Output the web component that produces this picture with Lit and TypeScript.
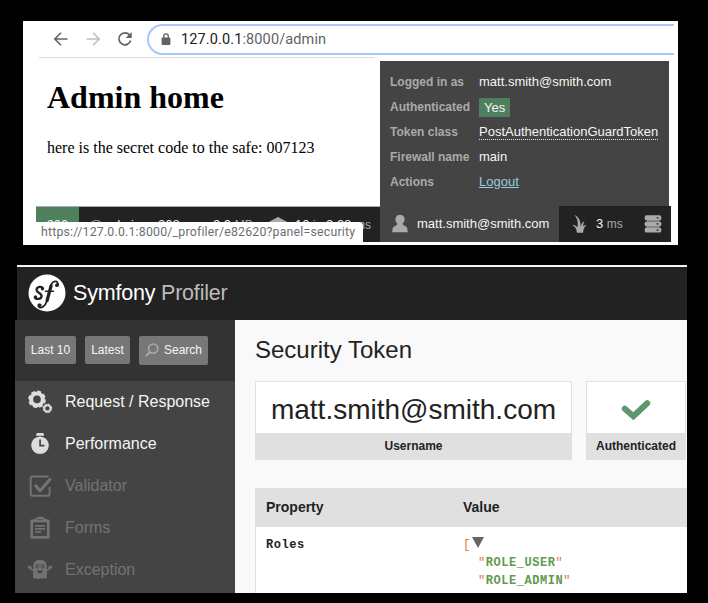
import { LitElement, html, css, svg } from "lit";
import { customElement } from "lit/decorators.js";

const icons = {
  back: svg`<svg width="16" height="16" viewBox="0 0 16 16" fill="none" stroke="#5f6368" stroke-width="1.6"><path d="M14.5 8H2M8 1.8 1.8 8 8 14.2"/></svg>`,
  forward: svg`<svg width="16" height="16" viewBox="0 0 16 16" fill="none" stroke="#bdbfc2" stroke-width="1.6"><path d="M1.5 8H14M8 1.8 14.2 8 8 14.2"/></svg>`,
  reload: svg`<svg width="16" height="16" viewBox="0 0 16 16"><path d="M12.6 4A6 6 0 1 0 13.7 9.6" fill="none" stroke="#5f6368" stroke-width="1.7"/><path d="M14.7 1v6.1H8.6z" fill="#5f6368"/></svg>`,
  lock: svg`<svg width="10" height="13" viewBox="0 0 10 13"><rect x=".6" y="4.6" width="8.8" height="7.4" rx="1" fill="#5f6368"/><path d="M2.7 5V3.2a2.3 2.3 0 0 1 4.6 0V5" fill="none" stroke="#5f6368" stroke-width="1.3"/></svg>`,
  user: svg`<svg width="16" height="19" viewBox="0 0 16 19" fill="#aaa"><path d="M8 .7C5.2.7 3.4 2.6 3.4 5.2c0 2 .9 3.7 2.2 4.6-.1.9-.8 1.3-2.2 1.9C1.1 12.7.4 13.7.3 18.3H15.7C15.6 13.7 14.9 12.7 12.6 11.7 11.2 11.1 10.5 10.7 10.4 9.8 11.7 8.900 12.600 7.200 12.600 5.200 12.600 2.600 10.800.7 8 .7z"/></svg>`,
  twig: svg`<svg width="15" height="18" viewBox="0 0 15 18" fill="#aaa"><path d="M2.300.1C7 2 8.800 6 8.800 12.200 9.200 8.800 10.300 6.800 12.600 6.200 11.600 8 11.100 9.600 11.100 11.400 12 10.300 13 9.900 14.600 10.400 12.300 11.500 11.400 13.800 11 17.700H4.800C4.700 14.200 3.600 11.800.4 10.200 2.600 9.800 4.200 10.800 5.300 12.600 6.500 7.500 5.600 3.600 2.300.1z"/></svg>`,
  server: svg`<svg width="18" height="18" viewBox="0 0 18 18"><g fill="#aaa"><rect x=".7" y=".3" width="16.6" height="5" rx="1.9"/><rect x="2.5" y="5.3" width="13" height="1"/><rect x=".7" y="6.4" width="16.6" height="5" rx="1.9"/><rect x="2.5" y="11.5" width="13" height="1"/><rect x=".7" y="12.6" width="16.6" height="5" rx="1.9"/></g><path d="M12.6 2.8h2M12.6 8.9h2M12.6 15.1h2" stroke="#222" stroke-width="1.3"/></svg>`,
  layers: svg`<svg width="18" height="16" viewBox="0 0 18 16" fill="#aaa"><path d="M9 0 17.5 4.500V12L9 16 .5 12V4.500z"/></svg>`,
  logo: svg`<svg width="38" height="38" viewBox="0 0 38 38"><circle cx="19" cy="19" r="18.5" fill="#fff"/><g fill="none" stroke="#222" stroke-linecap="round"><path d="M14.800 14.500C14.300 12 8.900 12.300 8.500 15.700 8.200 19 14.200 19.200 13.600 22.500 13 25.500 7.500 25.700 6.900 23.200" stroke-width="2.300"/><path d="M30 10.800C30.300 6.400 24.800 5.700 22.600 12.200L18.600 27.500C17.500 31.200 14 34.800 11.200 33.200 9.800 32.200 10 30.700 11.300 30.400" stroke-width="1.800"/><path d="M23.100 11.800 19.100 26.500" stroke-width="3.200"/><path d="M17.500 17.300h7.900" stroke-width="1.500"/></g><g fill="#222"><circle cx="14.500" cy="14.700" r="1.700"/><circle cx="7.500" cy="22.900" r="1.700"/><circle cx="29" cy="11.200" r="1.900"/><circle cx="11.800" cy="31.200" r="1.800"/></g></svg>`,
  search: svg`<svg width="14" height="14" viewBox="0 0 14 14" fill="none" stroke="#aaa" stroke-width="1.5"><circle cx="8.200" cy="5.600" r="4.600"/><path d="M5 9 .8 13" stroke-width="2"/></svg>`,
  gears: svg`<svg width="26" height="24" viewBox="0 0 26 24" fill="none" stroke="#ddd"><circle cx="10" cy="9.400" r="5.800" stroke-width="4"/><circle cx="10" cy="9.400" r="8" stroke-width="1.600" stroke-dasharray="4 2.283"/><circle cx="20.400" cy="18.400" r="3.200" stroke-width="2"/><circle cx="20.400" cy="18.400" r="4.300" stroke-width="1" stroke-dasharray="2.200 1.177"/></svg>`,
  clock: svg`<svg width="26" height="24" viewBox="0 0 26 24"><path d="M9.3 3.7V2.200Q9.300.9 11 .9h4.200q1.700 0 1.700 1.300v1.500z" fill="#ddd"/><circle cx="13" cy="13.200" r="8.800" fill="#ddd"/><path d="M13.100 7.500v6.200h4.400" fill="none" stroke="#444" stroke-width="1.700"/></svg>`,
  check: svg`<svg width="26" height="24" viewBox="0 0 26 24" fill="none" stroke="#737373"><path d="M21.500 2.500H5Q3.700 2.500 3.700 4v16Q3.700 21.700 5.200 21.700H21Q22.600 21.700 22.600 20v-7" stroke-width="1.900"/><path d="M8 11l5 5.800L23.800 4.600" stroke-width="3"/></svg>`,
  form: svg`<svg width="26" height="24" viewBox="0 0 26 24"><path d="M4.700 4.800H21.300V21.300H4.700z" fill="none" stroke="#737373" stroke-width="2.800" stroke-linejoin="round"/><path d="M7.200 6V2.500h2.300Q9.500.8 11 .8h4.500Q17 .8 17 2.500h2.300V6z" fill="#737373"/><path d="M10.500 3.600h5.500" stroke="#555"/><path d="M8 9.900h10M8 12.900h10M8 15.900h6" stroke="#737373" stroke-width="1.700"/></svg>`,
  ghost: svg`<svg width="26" height="24" viewBox="0 0 26 24"><path d="M6.200 20V8.500C6.200 3.800 9 2.100 13 2.100s6.800 1.700 6.800 6.400V20q-.6 1-1.500 0-1 1-2 0-.6 1.500-1.700.4-.8-1-1.600 0-1 1-1.600 0-1.200 1.200-2.100-.3-1.200 1.200-1.700 0-.9 1-1.400-.1z" fill="#737373"/><path d="M7 12.200Q3.800 12.500 2.900 8.900M.8 9.600h4M19 12.200q3.200.3 4.100-3.300M21.200 9.600h4M2.600 7.500v2M23.400 7.500v2" fill="none" stroke="#737373" stroke-width="1.600"/><ellipse cx="10.300" cy="8.300" rx="1.900" ry="2.400" fill="#4b4b4b"/><ellipse cx="15.700" cy="8.300" rx="1.900" ry="2.400" fill="#4b4b4b"/><circle cx="10.400" cy="8.300" r="1.100" fill="#737373"/><circle cx="15.600" cy="8.300" r="1.100" fill="#737373"/><path d="M10 12.400h6q-.6 2.800-3 2.800t-3-2.800z" fill="#444"/></svg>`,
  tick: svg`<svg width="30" height="22" viewBox="0 0 30 22"><path d="M3.800 9.700 12.400 17.300 26.200 4.200" fill="none" stroke="#5e976e" stroke-width="6" stroke-linecap="round" stroke-linejoin="miter"/></svg>`,
};

const menu = [
  { icon: icons.gears, label: "Request / Response", on: true },
  { icon: icons.clock, label: "Performance", on: true },
  { icon: icons.check, label: "Validator", on: false },
  { icon: icons.form, label: "Forms", on: false },
  { icon: icons.ghost, label: "Exception", on: false },
];

@customElement("browser-window")
class BrowserWindow extends LitElement {
  static styles = css`
    :host { display: block; position: relative; width: 655px; height: 224px; background: #fff; overflow: hidden; font-family: "Liberation Sans", Arial, sans-serif; }
    * { box-sizing: border-box; }
    svg { display: block; flex: none; }
    .nav { display: flex; align-items: center; height: 36px; padding: 0 4px 0 30px; gap: 16px; }
    .address { flex: 1; height: 31px; margin: 0 0 0 -2px; border: 2px solid #a8c7fa; border-right: 0; border-radius: 16px 0 0 16px; display: flex; align-items: center; gap: 10px; padding-left: 12px; font: 14.5px Roboto, sans-serif; letter-spacing: .12px; color: #5f6368; }
    .address b { font-weight: 400; color: #202124; }
    .line { width: 336px; height: 1px; margin-left: 16px; background: #dadce0; }
    .page { padding: 0 24px; font-family: "Liberation Serif", serif; color: #000; }
    h1 { margin: 21px 0 0; font-size: 32px; line-height: 36px; }
    p { margin: 24px 0 0; font-size: 16px; line-height: 18px; }
    .popup { position: absolute; left: 357px; top: 40px; width: 289px; height: 146px; margin: 0; background: #444; padding: 8px 10px; display: grid; grid-template-columns: 89px 1fr; grid-auto-rows: 25px; align-items: center; font-size: 13px; color: #f5f5f5; }
    .popup dt { font-weight: 700; font-size: 12px; color: #aaa; }
    .popup dd { margin: 0; white-space: nowrap; }
    .yes { display: inline-block; background: #4f805d; line-height: 19px; padding: 0 5px; position: relative; top: 1px; }
    .abbr { display: inline-block; line-height: 14px; border-bottom: 1px dotted #ddd; }
    .logout { color: #99cdd8; text-decoration: underline; }
    .bar { position: absolute; left: 13px; top: 185px; width: 635px; height: 36px; background: #222; display: flex; color: #f5f5f5; font-size: 13px; line-height: 36px; }
    .left { display: flex; width: 344px; border-top: 1px solid #aaa; }
    .code { width: 43px; background: #4f805d; text-align: center; }
    .route { padding-left: 10px; width: 79px; }
    .time { width: 55px; }
    .mem { width: 56px; }
    .cache { display: flex; align-items: center; gap: 8px; white-space: nowrap; }
    .user { width: 179px; background: #444; display: flex; align-items: center; gap: 9px; padding-left: 12px; line-height: 34px; padding-bottom: 1px; }
    .twig { display: flex; align-items: center; gap: 9px; padding-left: 13px; width: 85px; line-height: 34px; padding-bottom: 1px; }
    .srv { display: flex; align-items: center; padding-bottom: 1px; }
    .muted { color: #aaa; }
    .small { font-size: 12px; }
    .status { position: absolute; left: 0; top: 201px; width: 340px; height: 21px; border-radius: 0 4px 0 0; background: #fff; padding-left: 18px; font: 12.3px/20px Roboto, sans-serif; letter-spacing: .21px; color: #6b6e71; white-space: nowrap; }
  `;
  render() {
    return html`
      <div class="nav">${icons.back}${icons.forward}${icons.reload}
        <div class="address">${icons.lock}<span><b>127.0.0.1</b>:8000/admin</span></div>
      </div>
      <div class="line"></div>
      <div class="page"><h1>Admin home</h1><p>here is the secret code to the safe: 007123</p></div>
      <dl class="popup">
        <dt>Logged in as</dt><dd>matt.smith@smith.com</dd>
        <dt>Authenticated</dt><dd><span class="yes">Yes</span></dd>
        <dt>Token class</dt><dd><span class="abbr">PostAuthenticationGuardToken</span></dd>
        <dt>Firewall name</dt><dd>main</dd>
        <dt>Actions</dt><dd><span class="logout">Logout</span></dd>
      </dl>
      <div class="bar">
        <div class="left">
          <div class="code">200</div>
          <div class="route"><span class="muted">@</span> admin</div>
          <div class="time">208</div>
          <div class="mem">2.0 <span class="muted small">MB</span></div>
          <div class="cache">${icons.layers}<span>10 <span class="muted small">in</span> 2.28 <span class="muted small">ms</span></span></div>
        </div>
        <div class="user">${icons.user}<span>matt.smith@smith.com</span></div>
        <div class="twig">${icons.twig}<span>3 <span class="muted small">ms</span></span></div>
        <div class="srv">${icons.server}</div>
      </div>
      <div class="status">https://127.0.0.1:8000/_profiler/e82620?panel=security</div>`;
  }
}

@customElement("profiler-window")
class ProfilerWindow extends LitElement {
  static styles = css`
    :host { display: block; width: 672px; height: 328px; overflow: hidden; font-family: "Liberation Sans", Arial, sans-serif; color: #222; }
    * { box-sizing: border-box; }
    svg { display: block; flex: none; }
    header { margin-left: 2px; height: 55px; border-top: 2px solid #f5f5f5; background: #222; display: flex; align-items: center; gap: 7px; padding: 0 0 1px 11px; font-size: 21.5px; letter-spacing: -.2px; color: #fff; }
    header span { color: #bbb; }
    .cols { display: grid; grid-template-columns: 220px 1fr; height: 273px; }
    aside { background: #444; }
    .shortcuts { height: 61px; background: #333; padding: 16px 10px; display: flex; gap: 9px; color: #f5f5f5; font-size: 12px; }
    .btn { height: 28px; background: #777; border-radius: 2px; display: flex; align-items: center; justify-content: center; width: 51px; }
    .btn.latest { width: 45px; }
    .btn.search { width: 69px; height: 29px; gap: 5px; padding-bottom: 1px; }
    .item { height: 42px; display: flex; align-items: center; gap: 12px; padding-left: 12px; font-size: 16px; color: #737373; }
    .item.on { color: #f5f5f5; }
    main { background: #f9f9f9; padding-left: 20px; overflow: hidden; }
    h2 { margin: 16px 0 0; font-weight: 400; font-size: 24px; line-height: 28px; }
    .metrics { display: flex; gap: 14px; margin-top: 17px; }
    .metric { width: 317px; height: 79px; flex: none; background: #fff; border: 1px solid #e0e0e0; display: flex; flex-direction: column; text-align: center; }
    .metric.auth { width: 100px; }
    .value { flex: 1; display: flex; align-items: center; justify-content: center; font-size: 28px; padding-top: 5px; }
    .label { height: 26px; background: #e0e0e0; font-size: 12px; line-height: 26px; font-weight: 700; }
    .table { margin-top: 28px; border-left: 1px solid #e0e0e0; background: #fff; height: 120px; }
    .row { display: grid; grid-template-columns: 197px 1fr; padding-left: 10px; }
    .head { height: 39px; background: #e0e0e0; line-height: 38px; font-size: 14px; font-weight: 700; }
    .data { padding-top: 9px; font: 700 12px/18px "Liberation Mono", monospace; letter-spacing: .55px; }
    .code { white-space: pre; color: #5f9a4f; }
    .first { display: flex; gap: 1px; }
    .p { color: #dc7c35; font-weight: 400; }
    .tri { width: 0; height: 0; margin-top: 1px; border: 6px solid transparent; border-top: 11px solid #666; border-bottom: 0; }
    .role { padding-left: 15px; }
  `;
  render() {
    return html`
      <header>${icons.logo}<div>Symfony <span>Profiler</span></div></header>
      <div class="cols">
        <aside>
          <div class="shortcuts"><div class="btn">Last 10</div><div class="btn latest">Latest</div><div class="btn search">${icons.search}Search</div></div>
          ${menu.map((m) => html`<div class="item ${m.on ? "on" : ""}">${m.icon}<span>${m.label}</span></div>`)}
        </aside>
        <main>
          <h2>Security Token</h2>
          <div class="metrics">
            <div class="metric"><div class="value">matt.smith@smith.com</div><div class="label">Username</div></div>
            <div class="metric auth"><div class="value">${icons.tick}</div><div class="label">Authenticated</div></div>
          </div>
          <div class="table">
            <div class="row head"><div>Property</div><div>Value</div></div>
            <div class="row data"><div>Roles</div>
              <div class="code"><div class="first"><span class="p">[</span><i class="tri"></i></div><div class="role"><span class="p">"</span>ROLE_USER<span class="p">"</span></div><div class="role"><span class="p">"</span>ROLE_ADMIN<span class="p">"</span></div></div>
            </div>
          </div>
        </main>
      </div>`;
  }
}

@customElement("app-root")
class AppRoot extends LitElement {
  static styles = css`
    :host { display: flex; flex-direction: column; align-items: flex-start; gap: 20px; width: 708px; height: 603px; box-sizing: border-box; padding: 21px 0 0; background: #000; overflow: hidden; }
    browser-window { margin-left: 23px; }
    profiler-window { margin-left: 15px; }
  `;
  render() {
    return html`<browser-window></browser-window><profiler-window></profiler-window>`;
  }
}
